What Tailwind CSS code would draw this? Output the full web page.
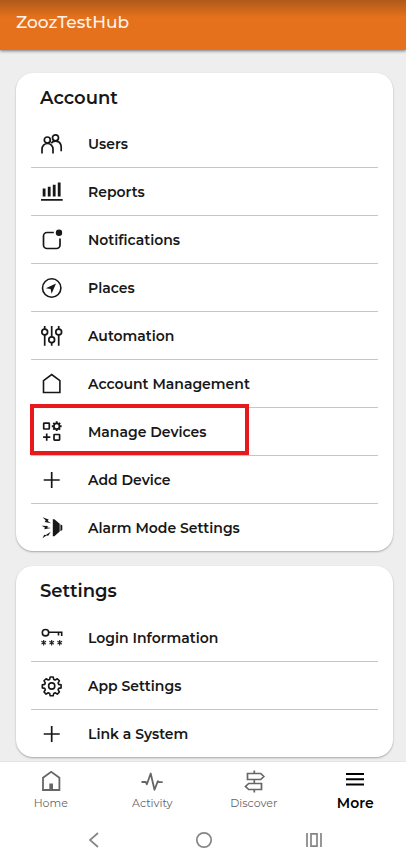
<!DOCTYPE html>
<html lang="en">
<head>
<meta charset="utf-8">
<meta name="viewport" content="width=device-width, initial-scale=1">
<title>ZoozTestHub</title>
<script src="https://cdn.jsdelivr.net/npm/@tailwindcss/browser@4"></script>
</head>
<body class="flex min-h-dvh flex-col bg-[#eeeeee] font-['Montserrat','Inter',sans-serif] text-[#171717]">
<header class="relative z-10 h-[50px] bg-linear-to-b from-[#af5a1a] to-[#e5711c] to-35% px-4 pt-[10px] shadow-[0_1px_3px_rgba(0,0,0,0.5)]">
  <h1 class="text-[17px] leading-6 font-medium text-[#fff3ea]">ZoozTestHub</h1>
</header>

<main class="flex flex-1 flex-col gap-[15px] pt-[23px] pr-[13px] pb-[4px] pl-4">
  <section aria-labelledby="account" class="rounded-[17px] bg-white px-[15px] shadow-[0_1px_2px_rgba(0,0,0,0.3)]">
    <h2 id="account" class="h-[47px] pt-[11px] pl-[9px] text-lg leading-7 font-semibold">Account</h2>
    <ul class="divide-y divide-[#c6c6c6] text-sm font-semibold">
      <li><a href="#users" class="flex h-[47px] items-center gap-6 pl-[9px]">
        <svg class="size-6" viewBox="0 0 24 24" fill="none" stroke="currentColor" stroke-width="1.7"><circle cx="7.3" cy="8" r="3"/><circle cx="15.5" cy="5.8" r="3"/><path d="M2 21.5v-4.200a5.500 5.800 0 0 1 11 0v4.200M11.200 11.200c2.200-3.200 10-3.200 10 4v4"/></svg>Users</a></li>
      <li><a href="#reports" class="flex h-[47px] items-center gap-6 pl-[9px]">
        <svg class="size-6" viewBox="0 0 24 24" fill="currentColor"><path d="M2.700 8.500h2.800v8H2.700zM7.800 6.800h2.800v9.700H7.800zM12.800 4.800h2.800v11.700h-2.800zM17.800 2.500h2.800v14h-2.800zM1 19h21.700v1.700H1z"/></svg>Reports</a></li>
      <li><a href="#notifications" class="flex h-[47px] items-center gap-6 pl-[9px]">
        <svg class="size-6" viewBox="0 0 24 24" fill="none" stroke="currentColor" stroke-width="1.7"><path d="M13.800 4.500H7a3.500 3.500 0 0 0-3.500 3.500v9A3.500 3.500 0 0 0 7 20.500h9.500A3.500 3.500 0 0 0 20 17v-6.500"/><circle cx="19" cy="4.700" r="3.200" fill="currentColor" stroke="none"/></svg>Notifications</a></li>
      <li><a href="#places" class="flex h-[47px] items-center gap-6 pl-[9px]">
        <svg class="size-6" viewBox="0 0 24 24" fill="none" stroke="currentColor" stroke-width="1.600"><circle cx="11.700" cy="12" r="9.200"/><path d="M16 7.500 5.800 12.200l4.800.900 1 4.600z" fill="currentColor" stroke="none"/></svg>Places</a></li>
      <li><a href="#automation" class="flex h-[47px] items-center gap-6 pl-[9px]">
        <svg class="size-6" viewBox="0 0 24 24" fill="none" stroke="currentColor" stroke-width="1.700"><circle cx="4.700" cy="8" r="2.900"/><circle cx="11.700" cy="15.700" r="2.900"/><circle cx="18.700" cy="8" r="2.900"/><path d="M4.700 2v3.100M4.700 10.900v10.800M11.700 2v10.800M11.700 18.600v3.100M18.700 2v3.100M18.700 10.900v10.800"/></svg>Automation</a></li>
      <li><a href="#account-management" class="flex h-[47px] items-center gap-6 pl-[9px]">
        <svg class="size-6" viewBox="0 0 24 24" fill="none" stroke="currentColor" stroke-width="1.600"><path d="M3.500 20.500V8.700l8.200-6.200 8.200 6.200v11.800z"/></svg>Account Management</a></li>
      <li class="relative"><a href="#manage-devices" class="flex h-[47px] items-center gap-6 pl-[9px]">
        <svg class="size-6" viewBox="0 0 24 24" fill="none" stroke="currentColor" stroke-width="1.700"><rect x="3.700" y="3.200" width="5.600" height="5.800" rx=".6"/><rect x="14" y="14.500" width="5.600" height="5.600" rx=".6"/><path d="M6.700 13.500v7.200M3.100 17.100h7.200"/><circle cx="16.700" cy="6.200" r="2.800"/><path stroke-width="1.900" d="M16.700 3.400V1.300M16.700 9v2.100M13.900 6.200h-2.100M19.500 6.200h2.100M14.700 4.200l-1.400-1.400M18.700 8.200l1.400 1.400M14.700 8.200l-1.400 1.400M18.700 4.200l1.400-1.400"/></svg>Manage Devices</a>
        <span class="pointer-events-none absolute -top-1 -left-px h-[51px] w-[219px] border-4 border-[#e8191c]"></span></li>
      <li><a href="#add-device" class="flex h-[47px] items-center gap-6 pl-[9px]">
        <svg class="size-6" viewBox="0 0 24 24" fill="none" stroke="currentColor" stroke-width="1.700"><path d="M11.700 4v16M3.700 12h16"/></svg>Add Device</a></li>
      <li><a href="#alarm-mode" class="flex h-[47px] items-center gap-6 pl-[9px]">
        <svg class="size-6" viewBox="0 0 24 24" fill="currentColor"><path d="M12.800 3.300h1.600l5.300 4.500v7.800l-5.300 4.600h-1.600zM20.400 8.300l1.900 1.200v4.500l-1.900 1.200z"/><path d="m2.500 1.200 6.200 2.300-1 1.500 3.300 2.200-6.300-1.300 1-1.600zM1.500 9.800l6.300.3-.5 1.500 3.700.5-6.700 1.200.6-1.800zM2.500 22.200l1.700-3.400 1.600.3 5-3.300-2.600 4-1.800-.4z"/></svg>Alarm Mode Settings</a></li>
    </ul>
  </section>

  <section aria-labelledby="settings" class="rounded-[17px] bg-white px-[15px] shadow-[0_1px_2px_rgba(0,0,0,0.3)]">
    <h2 id="settings" class="h-12 pt-[11px] pl-[9px] text-lg leading-7 font-semibold">Settings</h2>
    <ul class="divide-y divide-[#c6c6c6] text-sm font-semibold">
      <li><a href="#login" class="flex h-[47px] items-center gap-6 pl-[9px]">
        <svg class="size-6" viewBox="0 0 24 24" fill="none" stroke="currentColor" stroke-width="1.600"><circle cx="5.500" cy="6.700" r="3.200"/><path d="M8.700 6.200h13v3.700M18.500 6.200v3.200"/><path stroke-width="1.100" d="M3.700 14v5.400M1.400 15.300l4.600 2.800M6 15.300l-4.600 2.800M11.700 14v5.400M9.400 15.300l4.600 2.800M14 15.300l-4.600 2.800M19.700 14v5.400M17.400 15.300l4.600 2.800M22 15.300l-4.600 2.800"/></svg>Login Information</a></li>
      <li><a href="#app-settings" class="flex h-[47px] items-center gap-6 pl-[9px]">
        <svg class="size-6" viewBox="0 0 24 24" fill="none" stroke="currentColor" stroke-width="1.600" stroke-linejoin="round"><circle cx="11.700" cy="12" r="3.100"/><path d="M10.200 3h3l.5 2.400 1.500.6 2.100-1.300 2.100 2.100-1.300 2.100.6 1.500 2.400.5v3l-2.400.5-.6 1.500 1.300 2.100-2.100 2.100-2.100-1.300-1.500.6-.5 2.400h-3l-.5-2.400-1.500-.6-2.100 1.300L4 18l1.300-2.100-.6-1.500-2.400-.5v-3l2.400-.5.600-1.500L4 6.800l2.100-2.100L8.200 6l1.500-.6z"/></svg>App Settings</a></li>
      <li><a href="#link-system" class="flex h-[47px] items-center gap-6 pl-[9px]">
        <svg class="size-6" viewBox="0 0 24 24" fill="none" stroke="currentColor" stroke-width="1.700"><path d="M11.700 4v16M3.700 12h16"/></svg>Link a System</a></li>
    </ul>
  </section>
</main>

<footer class="border-t border-[#e4e4e4] bg-white">
  <nav aria-label="Main" class="grid grid-cols-4 pt-[7px] text-[11px] leading-5 text-[#666666]">
    <a href="#home" class="flex flex-col items-center"><svg class="size-6" viewBox="0 0 24 24" fill="none" stroke="currentColor" stroke-width="1.800"><path d="M4 21V8.800l8.200-6 8.200 6V21z"/><path d="M10.300 14.500H14V21h-3.700z" fill="currentColor" stroke="none"/></svg>Home</a>
    <a href="#activity" class="flex flex-col items-center"><svg class="size-6" viewBox="0 0 24 24" fill="none" stroke="currentColor" stroke-width="1.800" stroke-linejoin="round"><path d="M1.500 13h4.300l1.100 2.300L10.700 4.500l3.800 16.300 3.300-8.600 1.400 1h3.500"/></svg>Activity</a>
    <a href="#discover" class="flex flex-col items-center"><svg class="size-6" viewBox="0 0 24 24" fill="none" stroke="currentColor" stroke-width="1.700"><path d="M12.300 1.500v3M12.300 10.500v4M12.300 20.500v3M5.500 4.500h13.200l3.100 3-3.100 3H5.500zM19.500 14.500H6.700l-3.200 3 3.200 3h12.800z"/></svg>Discover</a>
    <a href="#more" aria-current="page" class="flex flex-col items-center text-sm leading-5 font-semibold text-black"><svg class="size-6" viewBox="0 0 24 24" fill="none" stroke="currentColor" stroke-width="1.900"><path d="M3 5h18M3 10.300h18M3 15.500h18"/></svg>More</a>
  </nav>
  <div class="flex h-[49px] items-center justify-center gap-[86px] pt-[4px] text-[#858585]">
    <button type="button" aria-label="Back" class="size-6"><svg viewBox="0 0 24 24" fill="none" stroke="currentColor" stroke-width="1.700"><path d="m17 5-8 7 8 7"/></svg></button>
    <button type="button" aria-label="Home screen" class="size-6"><svg viewBox="0 0 24 24" fill="none" stroke="currentColor" stroke-width="1.700"><circle cx="13" cy="12" r="7.200"/></svg></button>
    <button type="button" aria-label="Recent apps" class="size-6"><svg viewBox="0 0 24 24" fill="none" stroke="currentColor" stroke-width="1.700"><path d="M6 5v14M20 5v14M10 5.800h6v12.400h-6z"/></svg></button>
  </div>
</footer>
</body>
</html>
